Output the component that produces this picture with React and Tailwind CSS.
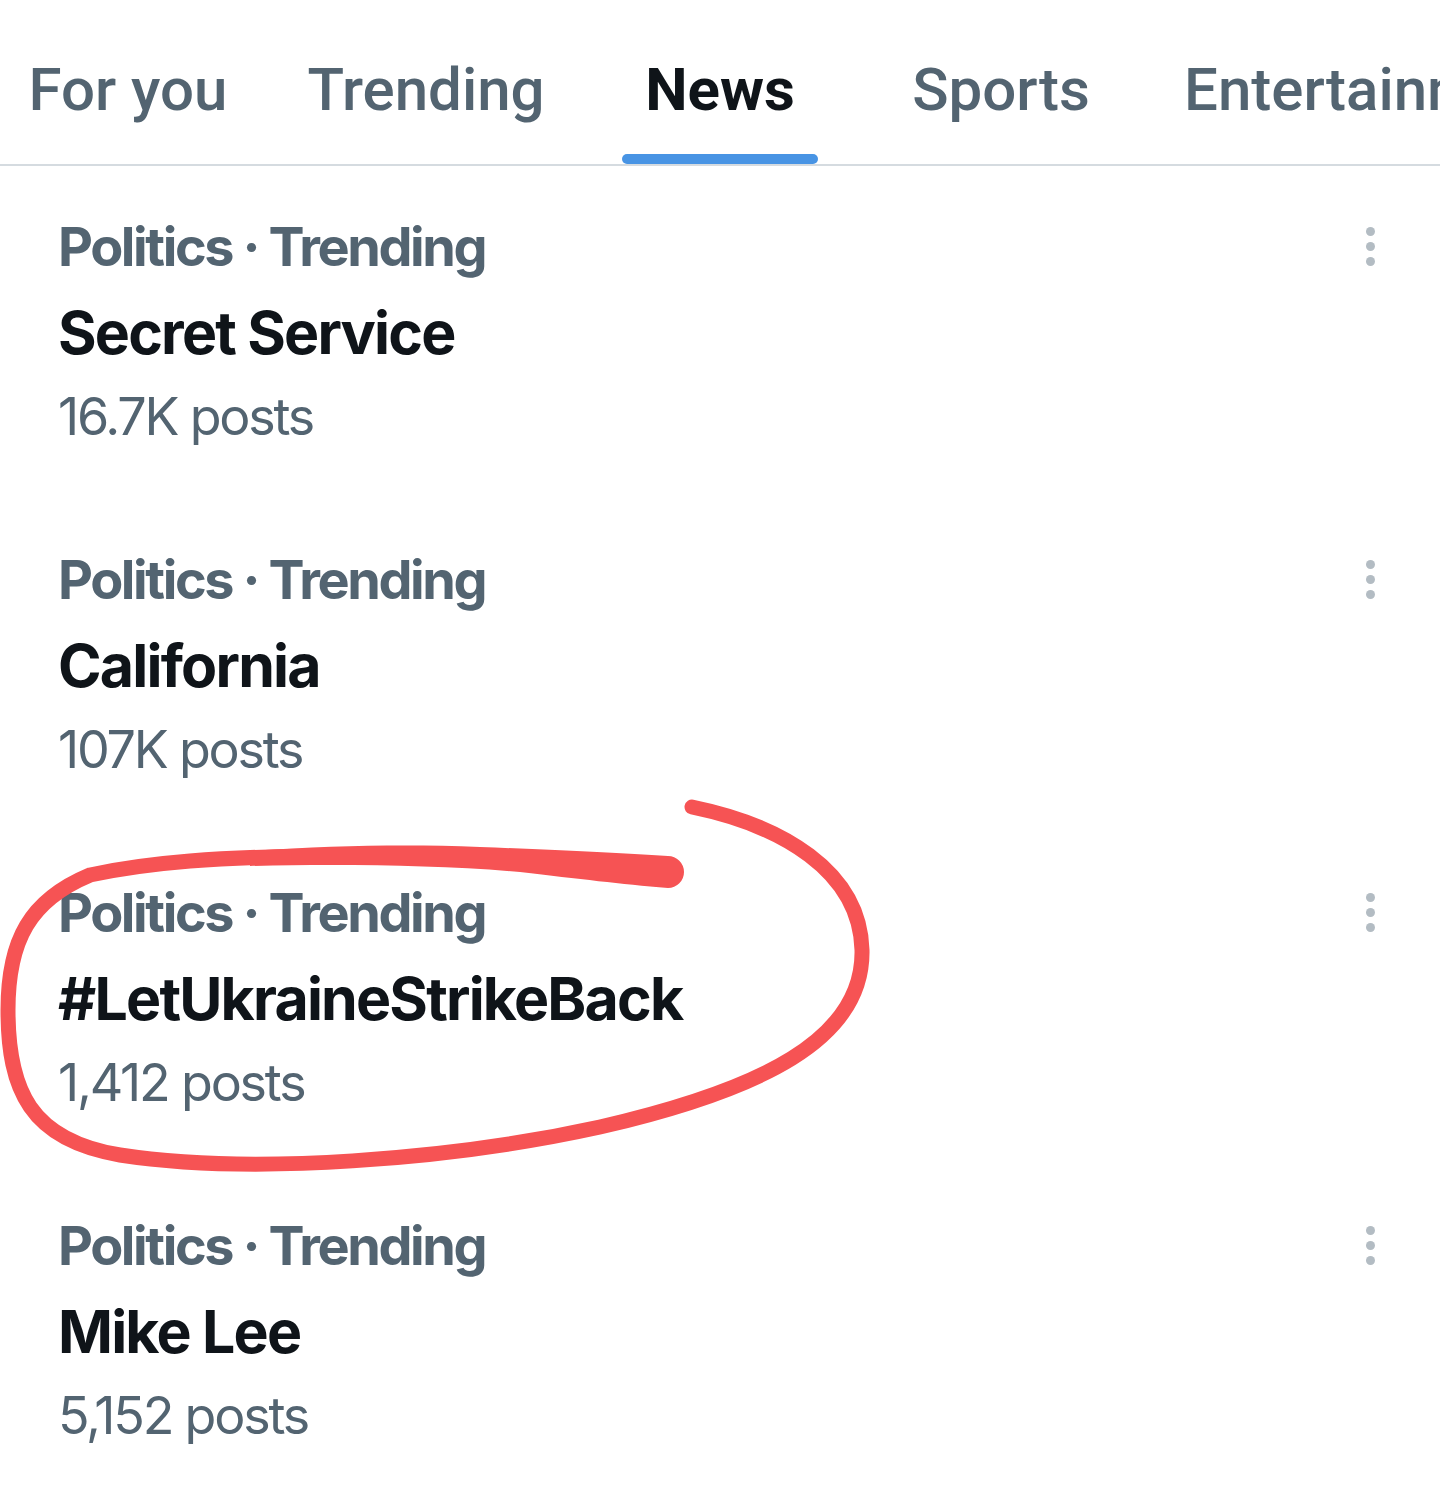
import React from "react";

const rows = [
  { title: "Secret Service", posts: "16.7K posts" },
  { title: "California", posts: "107K posts" },
  { title: "#LetUkraineStrikeBack", posts: "1,412 posts" },
  { title: "Mike Lee", posts: "5,152 posts" },
];

function Dots() {
  return (
    <div className="flex flex-col items-center gap-[6px] mt-[61px] mr-[65px] w-[10px]">
      <span className="block w-[9px] h-[9px] rounded-full bg-[#b3bcc3]" />
      <span className="block w-[9px] h-[9px] rounded-full bg-[#b3bcc3]" />
      <span className="block w-[9px] h-[9px] rounded-full bg-[#b3bcc3]" />
    </div>
  );
}

function Tab({ label, active, w }) {
  return (
    <div className={`flex flex-col items-center shrink-0 ${w}`}>
      <div
        className={`pt-[55px] h-[125px] text-[60px] leading-[70px] whitespace-nowrap ${
          active ? "font-bold text-[#0f1419]" : "font-medium text-[#536471]"
        }`}
      >
        {label}
      </div>
      <div className={`mt-[29px] h-[10px] w-[196px] rounded-full ${active ? "bg-[#4894e4]" : "bg-transparent"}`} />
    </div>
  );
}

export default function App() {
  return (
    <div className="relative w-[1440px] h-[1503px] bg-white overflow-hidden" style={{ fontFamily: "Inter, 'Noto Sans', sans-serif" }}>
      <div className="flex h-[166px] border-b-2 border-[#d5dbe0] overflow-hidden" style={{ fontFamily: "Roboto, 'Noto Sans', sans-serif" }}>
        <Tab label="For you" w="w-[256px]" />
        <Tab label="Trending" w="w-[340px]" />
        <Tab label="News" active w="w-[248px]" />
        <Tab label="Sports" w="w-[314px]" />
        <div className="shrink-0 pl-[26px] pt-[55px] text-[60px] leading-[70px] font-medium text-[#536471] whitespace-nowrap">
          Entertainment
        </div>
      </div>
      <div className="flex flex-col">
        {rows.map((r) => (
          <div key={r.title} className="flex justify-between h-[333px] pl-[58px]">
            <div className="pt-[51px]">
              <div className="text-[54px] leading-[60px] font-bold text-[#536471] tracking-[-2.4px]">
                Politics · Trending
              </div>
              <div className="mt-[14px] text-[59px] leading-[84px] font-bold text-[#0f1419] tracking-[-1.8px]">
                {r.title}
              </div>
              <div className="text-[52px] leading-[83px] text-[#536471] tracking-[-2.2px]">{r.posts}</div>
            </div>
            <Dots />
          </div>
        ))}
      </div>
      <svg className="absolute inset-0 pointer-events-none" width="1440" height="1503" viewBox="0 0 1440 1503">
        <path
          d="M692 807 C780 825 860 870 862 950 C864 1040 760 1090 600 1127 C450 1160 250 1175 120 1155 C30 1140 8 1090 8 1010 C8 940 30 900 90 875 C150 862 220 857 320 856"
          fill="none"
          stroke="#f65354"
          strokeWidth="15"
          strokeLinecap="round"
        />
        <path
          d="M250 851 C330 846 400 844 480 847 C560 850 620 853 668 856 A16 16 0 0 1 668 888 C620 884 580 879 520 872 C440 865 340 864 250 866 Z"
          fill="#f65354"
        />
      </svg>
    </div>
  );
}
